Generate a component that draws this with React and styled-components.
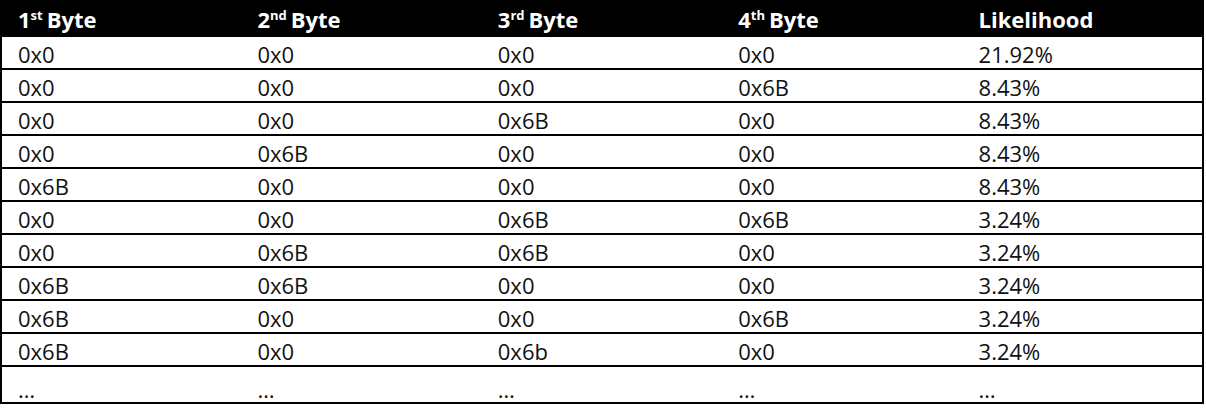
import React from 'react'
import styled, { createGlobalStyle } from 'styled-components'

const GlobalStyle = createGlobalStyle`
  html, body {
    margin: 0;
    padding: 0;
    background: #ffffff;
  }
`

const Table = styled.table`
  width: 1204px;
  border-collapse: collapse;
  border: 2px solid #000;
  font-family: "Open Sans", "Noto Sans", sans-serif;
  font-size: 22px;
  color: #111;
  table-layout: fixed;
`

const HeadCell = styled.th`
  box-sizing: border-box;
  background: #000;
  color: #fff;
  font-weight: 700;
  text-align: left;
  height: 35px;
  padding: 0 0 0 16px;
  vertical-align: middle;
  line-height: 1;
`

const Sup = styled.sup`
  font-size: 13px;
  vertical-align: 0;
  position: relative;
  top: -8px;
  margin-right: 4px;
`

const Row = styled.tr`
  border-top: 2px solid #000;
`

const Cell = styled.td`
  box-sizing: border-box;
  height: ${p => (p.$dots ? '37px' : '33px')};
  padding: ${p => (p.$dots ? '0 0 2px 16px' : '3px 0 0 16px')};
  vertical-align: ${p => (p.$dots ? 'bottom' : 'middle')};
  line-height: 1;
  font-weight: 400;
`

const headers = [
  ['1', 'st', 'Byte'],
  ['2', 'nd', 'Byte'],
  ['3', 'rd', 'Byte'],
  ['4', 'th', 'Byte'],
]

const rows = [
  ['0x0', '0x0', '0x0', '0x0', '21.92%'],
  ['0x0', '0x0', '0x0', '0x6B', '8.43%'],
  ['0x0', '0x0', '0x6B', '0x0', '8.43%'],
  ['0x0', '0x6B', '0x0', '0x0', '8.43%'],
  ['0x6B', '0x0', '0x0', '0x0', '8.43%'],
  ['0x0', '0x0', '0x6B', '0x6B', '3.24%'],
  ['0x0', '0x6B', '0x6B', '0x0', '3.24%'],
  ['0x6B', '0x6B', '0x0', '0x0', '3.24%'],
  ['0x6B', '0x0', '0x0', '0x6B', '3.24%'],
  ['0x6B', '0x0', '0x6b', '0x0', '3.24%'],
]

export default function App() {
  return (
    <>
      <GlobalStyle />
      <Table>
        <thead>
          <tr>
            {headers.map(([n, s, w]) => (
              <HeadCell key={n}>
                {n}
                <Sup>{s}</Sup>
                {w}
              </HeadCell>
            ))}
            <HeadCell>Likelihood</HeadCell>
          </tr>
        </thead>
        <tbody>
          {rows.map((r, i) => (
            <Row key={i}>
              {r.map((c, j) => (
                <Cell key={j}>{c}</Cell>
              ))}
            </Row>
          ))}
          <Row>
            {[0, 1, 2, 3, 4].map(j => (
              <Cell key={j} $dots>
                …
              </Cell>
            ))}
          </Row>
        </tbody>
      </Table>
    </>
  )
}
